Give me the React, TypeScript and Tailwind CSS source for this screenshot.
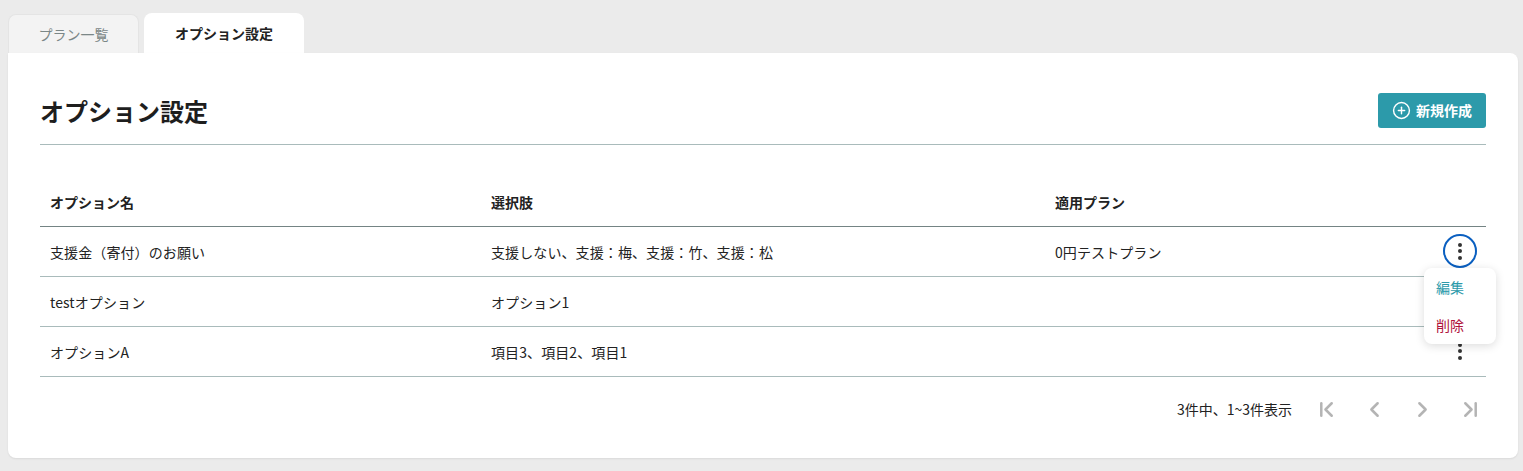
import { ChevronLeft, ChevronRight, ChevronFirst, ChevronLast, CirclePlus } from "lucide-react";

const rows = [
  { name: "支援金（寄付）のお願い", choices: "支援しない、支援：梅、支援：竹、支援：松", plan: "0円テストプラン" },
  { name: "testオプション", choices: "オプション1", plan: "" },
  { name: "オプションA", choices: "項目3、項目2、項目1", plan: "" },
];

// Three dot menu button
function Kebab({ active }: { active?: boolean }) {
  return (
    <button
      className={`flex h-[34px] w-[34px] flex-col items-center justify-center gap-[2.5px] rounded-full ${
        active ? "border-2 border-[#0a5fc0]" : ""
      }`}
    >
      <span className="h-1 w-1 rounded-full bg-[#333]" />
      <span className="h-1 w-1 rounded-full bg-[#333]" />
      <span className="h-1 w-1 rounded-full bg-[#333]" />
    </button>
  );
}

export default function App() {
  return (
    <div className="h-[471px] w-[1523px] overflow-hidden bg-[#ebebeb] pl-2 pr-[5px] pt-[13px] font-['Noto_Sans_CJK_JP',sans-serif] text-[14px] text-[#222]">
      {/* Tabs */}
      <div className="flex h-10 items-end gap-[5px]">
        <div className="flex h-[39px] w-[131px] items-center justify-center rounded-t-lg border border-b-0 border-[#e4e4e4] bg-[#f3f3f3] text-[#7b8787]">
          プラン一覧
        </div>
        <div className="flex h-10 w-40 items-center justify-center rounded-t-lg bg-white font-bold">
          オプション設定
        </div>
      </div>

      {/* Card */}
      <div className="relative h-[405px] rounded-b-lg rounded-tr-lg bg-white px-8 shadow-[0_1px_2px_rgba(0,0,0,0.08)]">
        <div className="flex h-[92px] items-center justify-between border-b border-[#a9bbbb] pt-6">
          <h1 className="text-[24px] font-bold leading-none text-[#1e1e1e]">オプション設定</h1>
          <button className="flex h-[35px] w-[108px] items-center justify-center gap-[5px] rounded-[3px] bg-[#2c9aaa] font-bold text-white">
            <CirclePlus size={19} strokeWidth={1.8} />
            新規作成
          </button>
        </div>

        <table className="mt-[31px] w-full table-fixed border-collapse text-left">
          <colgroup>
            <col className="w-[441px]" />
            <col className="w-[564px]" />
            <col />
            <col className="w-[60px]" />
          </colgroup>
          <thead>
            <tr className="h-[50px] border-b border-[#748484]">
              <th className="px-2.5 pt-1 font-bold">オプション名</th>
              <th className="px-2.5 pt-1 font-bold">選択肢</th>
              <th className="px-2.5 pt-1 font-bold">適用プラン</th>
              <th />
            </tr>
          </thead>
          <tbody>
            {rows.map((row, i) => (
              <tr key={row.name} className="h-[50px] border-b border-[#a9bbbb]">
                <td className="px-2.5 pt-[2px] tracking-[0.1px]">{row.name}</td>
                <td className="px-2.5 pt-[2px] tracking-[0.1px]">{row.choices}</td>
                <td className="px-2.5 pt-[2px] tracking-[0.1px]">{row.plan}</td>
                <td>
                  <div className="flex justify-end pr-[9px]">
                    <Kebab active={i === 0} />
                  </div>
                </td>
              </tr>
            ))}
          </tbody>
        </table>

        {/* Pagination */}
        <div className="-mr-2 mt-[14px] flex h-[38px] items-center justify-end">
          <span className="mr-[10px]">3件中、1~3件表示</span>
          {[ChevronFirst, ChevronLeft, ChevronRight, ChevronLast].map((Icon, i) => (
            <span key={i} className="flex h-10 w-12 items-center justify-center text-[#b4b4b4]">
              <Icon size={25} strokeWidth={2.4} />
            </span>
          ))}
        </div>

        {/* Row menu */}
        <div className="absolute left-[1416px] top-[215px] flex h-[76px] w-[72px] flex-col justify-center gap-[18px] rounded-lg bg-white pl-3 shadow-[0_2px_10px_rgba(0,0,0,0.14)]">
          <span className="leading-5 text-[#2c9aaa]">編集</span>
          <span className="leading-5 text-[#b0123b]">削除</span>
        </div>
      </div>
    </div>
  );
}
